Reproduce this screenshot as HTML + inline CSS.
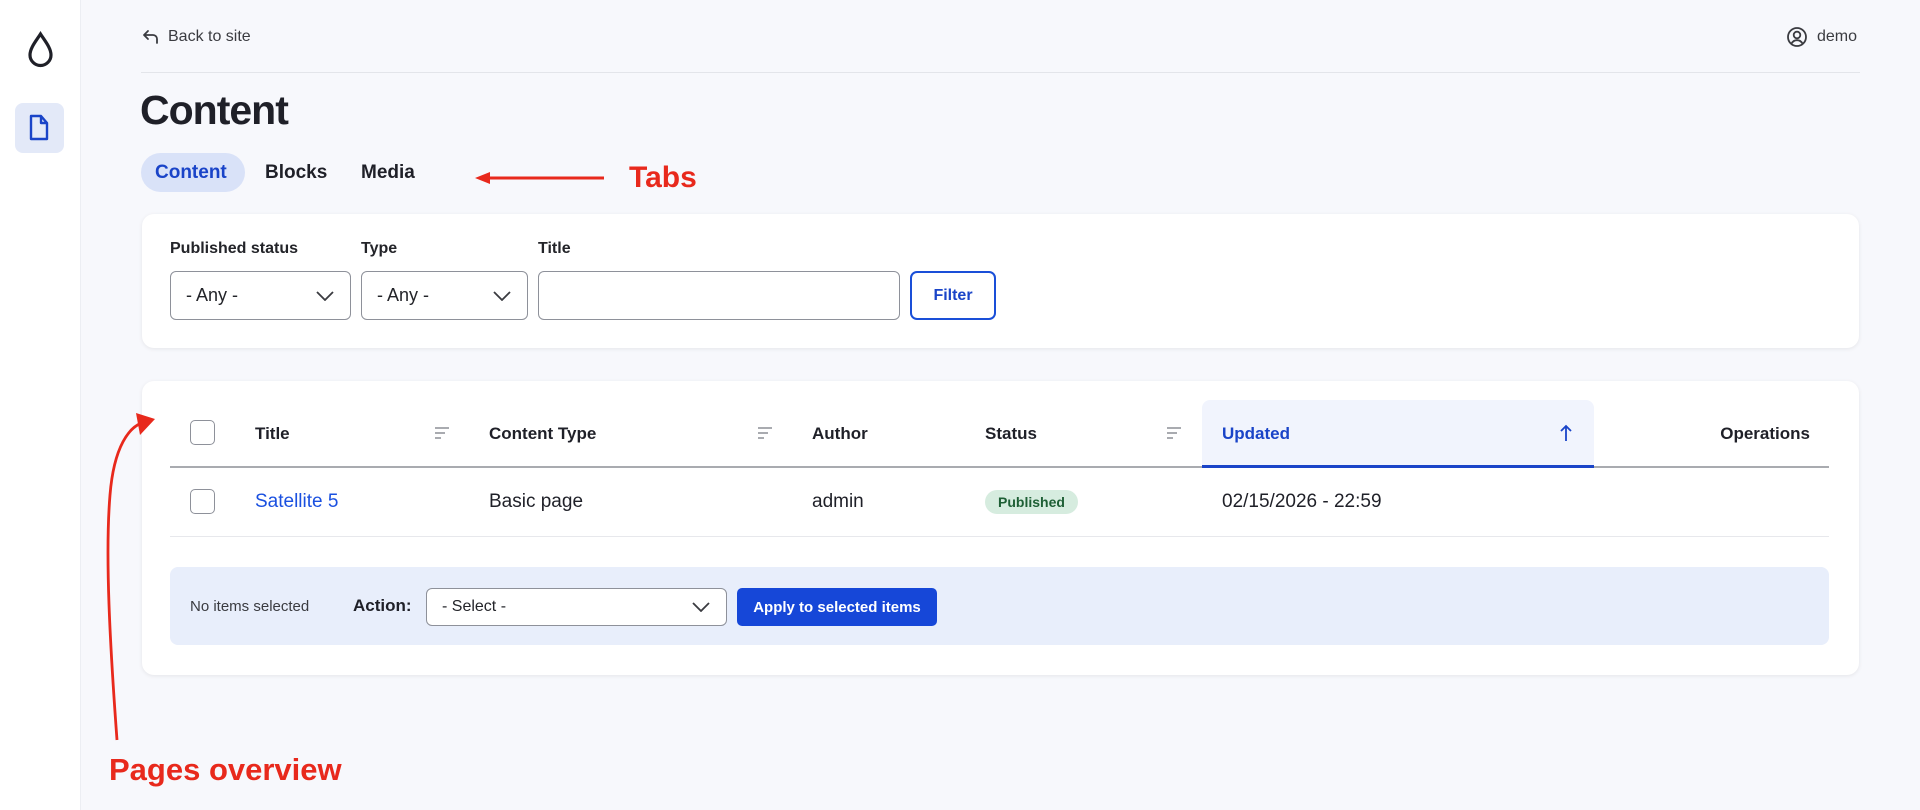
<!DOCTYPE html>
<html><head><meta charset="utf-8"><style>
*{box-sizing:border-box;margin:0;padding:0}
body{width:1920px;height:810px;overflow:hidden;background:#f7f8fc;font-family:"Liberation Sans",sans-serif;color:#1f2028;position:relative}
.a{position:absolute}
.side{left:0;top:0;width:81px;height:810px;background:#fff;border-right:1px solid #eceef3}
.card{background:#fff;border-radius:12px;box-shadow:0 1px 4px rgba(0,0,0,.08)}
.lbl{font-size:16px;font-weight:bold;color:#232429}
.sel{border:1px solid #8e919a;border-radius:6px;background:#fff;font-size:18px;color:#232429;padding-left:15px;display:flex;align-items:center}
.chev{position:absolute;right:16px;top:50%;margin-top:-5px}
.th{font-size:17px;font-weight:bold;top:424px}
.cb{width:25px;height:25px;border:1.5px solid #8e919a;border-radius:5px;background:#fff}
.td{font-size:19px;top:491px}
.red{color:#e8291c;font-weight:bold}
</style></head><body>
<div class="a side"></div>
<svg class="a" style="left:27px;top:31px" width="27" height="37" viewBox="0 0 27 37"><path d="M13.5 3 C9 10 3 17 3 24 a10.5 10.5 0 0 0 21 0 C24 17 18 10 13.5 3Z" fill="none" stroke="#1f2028" stroke-width="3.2"/></svg>
<div class="a" style="left:15px;top:103px;width:49px;height:50px;background:#e3e9f8;border-radius:8px"></div>
<svg class="a" style="left:28px;top:114px" width="22" height="28" viewBox="0 0 22 28"><path d="M3 2h10l6 7v16H3Z M13 2v7h6" fill="none" stroke="#1a44c8" stroke-width="2.4" stroke-linejoin="round"/></svg>
<svg class="a" style="left:142px;top:29px" width="18" height="16" viewBox="0 0 18 16"><path d="M6 2L2 6l4 4M2 6h9a4 4 0 0 1 4 4v4" fill="none" stroke="#3a3b40" stroke-width="1.8" stroke-linecap="round" stroke-linejoin="round"/></svg>
<div class="a" style="left:168px;top:28px;font-size:16px;color:#3a3b40">Back to site</div>
<svg class="a" style="left:1786px;top:26px" width="22" height="22" viewBox="0 0 22 22"><circle cx="11" cy="11" r="9" fill="none" stroke="#3a3b40" stroke-width="1.8"/><circle cx="11" cy="9" r="3.3" fill="none" stroke="#3a3b40" stroke-width="1.8"/><path d="M5.5 17.5c1.5-2.5 3.3-3.3 5.5-3.3s4 .8 5.5 3.3" fill="none" stroke="#3a3b40" stroke-width="1.8"/></svg>
<div class="a" style="left:1817px;top:28px;font-size:16px;color:#3a3b40">demo</div>
<div class="a" style="left:141px;top:72px;width:1719px;height:1px;background:#e3e5ea"></div>
<div class="a" style="left:140px;top:87px;font-size:41px;font-weight:bold;letter-spacing:-1px">Content</div>
<div class="a" style="left:141px;top:153px;width:104px;height:39px;background:#d9e2f8;border-radius:20px"></div>
<div class="a" style="left:155px;top:162px;font-size:19px;font-weight:bold;color:#1a44c8">Content</div>
<div class="a" style="left:265px;top:162px;font-size:19px;font-weight:bold">Blocks</div>
<div class="a" style="left:361px;top:162px;font-size:19px;font-weight:bold">Media</div>
<svg class="a" style="left:470px;top:168px" width="140" height="20"><path d="M18 10H134" stroke="#e8291c" stroke-width="3"/><path d="M5 10L20 4v12Z" fill="#e8291c"/></svg>
<div class="a red" style="left:629px;top:161px;font-size:30px">Tabs</div>

<div class="a card" style="left:142px;top:214px;width:1717px;height:134px"></div>
<div class="a lbl" style="left:170px;top:240px">Published status</div>
<div class="a lbl" style="left:361px;top:240px">Type</div>
<div class="a lbl" style="left:538px;top:240px">Title</div>
<div class="a sel" style="left:170px;top:271px;width:181px;height:49px">- Any -<svg class="chev" width="18" height="10"><path d="M1 1l8 8 8-8" fill="none" stroke="#3a3b40" stroke-width="1.8"/></svg></div>
<div class="a sel" style="left:361px;top:271px;width:167px;height:49px">- Any -<svg class="chev" width="18" height="10"><path d="M1 1l8 8 8-8" fill="none" stroke="#3a3b40" stroke-width="1.8"/></svg></div>
<div class="a sel" style="left:538px;top:271px;width:362px;height:49px"></div>
<div class="a" style="left:910px;top:271px;width:86px;height:49px;border:2px solid #1a4fd8;border-radius:7px;color:#1a44c8;font-size:16px;font-weight:600;display:flex;align-items:center;justify-content:center">Filter</div>

<div class="a card" style="left:142px;top:381px;width:1717px;height:294px"></div>
<div class="a" style="left:1202px;top:400px;width:392px;height:67px;background:#f1f4fd;border-radius:8px 8px 0 0"></div>
<div class="a" style="left:170px;top:466px;width:1659px;height:2px;background:#a9abb0"></div>
<div class="a" style="left:1202px;top:465px;width:392px;height:3px;background:#1a44c8"></div>
<div class="a cb" style="left:190px;top:420px"></div>
<div class="a th" style="left:255px">Title</div>
<div class="a th" style="left:489px">Content Type</div>
<div class="a th" style="left:812px">Author</div>
<div class="a th" style="left:985px">Status</div>
<div class="a th" style="left:1222px;color:#1a44c8">Updated</div>
<div class="a th" style="left:1700px;width:110px;text-align:right">Operations</div>
<svg class="a" style="left:434px;top:426px" width="16" height="14"><path d="M1 2h14M1 7h10M1 12h6" stroke="#a9abb0" stroke-width="2"/></svg>
<svg class="a" style="left:757px;top:426px" width="16" height="14"><path d="M1 2h14M1 7h10M1 12h6" stroke="#a9abb0" stroke-width="2"/></svg>
<svg class="a" style="left:1166px;top:426px" width="16" height="14"><path d="M1 2h14M1 7h10M1 12h6" stroke="#a9abb0" stroke-width="2"/></svg>
<svg class="a" style="left:1559px;top:424px" width="14" height="18"><path d="M7 17V2M2 7l5-5 5 5" fill="none" stroke="#1a44c8" stroke-width="1.8"/></svg>
<div class="a cb" style="left:190px;top:489px"></div>
<div class="a td" style="left:255px;color:#1a50e0">Satellite 5</div>
<div class="a td" style="left:489px">Basic page</div>
<div class="a td" style="left:812px">admin</div>
<div class="a" style="left:985px;top:490px;width:93px;height:24px;background:#d6ecdf;border-radius:12px;color:#1e5f35;font-size:14px;font-weight:bold;display:flex;align-items:center;justify-content:center">Published</div>
<div class="a td" style="left:1222px">02/15/2026 - 22:59</div>
<div class="a" style="left:170px;top:536px;width:1659px;height:1px;background:#e7e8ec"></div>

<div class="a" style="left:170px;top:567px;width:1659px;height:78px;background:#e8eefb;border-radius:8px"></div>
<div class="a" style="left:190px;top:598px;font-size:15px;color:#3a3b40">No items selected</div>
<div class="a" style="left:353px;top:596px;font-size:17px;font-weight:bold">Action:</div>
<div class="a sel" style="left:426px;top:588px;width:301px;height:38px;font-size:16px">- Select -<svg class="chev" width="18" height="10"><path d="M1 1l8 8 8-8" fill="none" stroke="#3a3b40" stroke-width="1.8"/></svg></div>
<div class="a" style="left:737px;top:588px;width:200px;height:38px;background:#1647d8;border-radius:5px;color:#fff;font-size:15px;font-weight:600;display:flex;align-items:center;justify-content:center">Apply to selected items</div>

<svg class="a" style="left:100px;top:405px" width="70" height="340"><path d="M17 335 C10 240 5 150 10 90 C14 40 30 22 42 18" fill="none" stroke="#e8291c" stroke-width="2.8"/><path d="M55 14 L36 8 L40 30Z" fill="#e8291c"/></svg>
<div class="a red" style="left:109px;top:752px;font-size:31px">Pages overview</div>
</body></html>
